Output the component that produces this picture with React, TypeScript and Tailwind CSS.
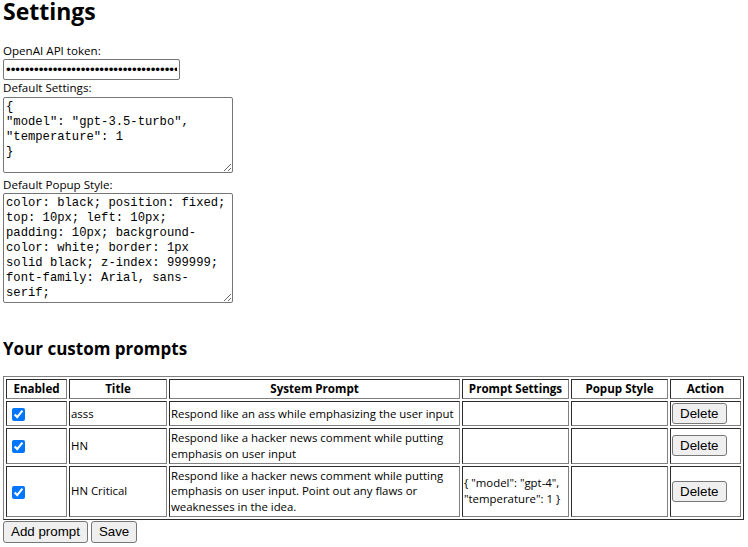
import React from "react";

const rows = [
  {
    title: "asss",
    prompt: "Respond like an ass while emphasizing the user input",
    settings: "",
    style: "",
  },
  {
    title: "HN",
    prompt: "Respond like a hacker news comment while putting emphasis on user input",
    settings: "",
    style: "",
  },
  {
    title: "HN Critical",
    prompt:
      "Respond like a hacker news comment while putting emphasis on user input. Point out any flaws or weaknesses in the idea.",
    settings: '{ "model": "gpt-4", "temperature": 1 }',
    style: "",
  },
];

const btn =
  "bg-[#efefef] border border-[#767676] rounded-[3px] px-[7px] text-[13.33px] leading-[15px] text-black font-['Liberation_Sans',Arial,sans-serif]";

const cell = "[border:1px_inset_#808080] p-[1px] align-middle";
const head = `${cell} font-bold text-center leading-[16px] text-[11.6px]`;

export default function App() {
  return (
    <div className="min-h-screen bg-white text-black pl-[3px] font-['Open_Sans',sans-serif]">
      <h1 className="text-[23px] leading-[22px] font-bold">Settings</h1>

      <label className="block text-[11.6px] leading-[16px] mt-[21px]">OpenAI API token:</label>
      <input
        type="password"
        readOnly
        defaultValue="sk-abcdefghijklmnopqrstuvwxyz0123456789ABCDEFGHIJKL"
        className="block w-[177px] h-[21px] border border-[#767676] rounded-[2px] px-[2px] py-[1px] text-[13.33px] font-['Liberation_Sans',Arial,sans-serif] bg-white outline-none"
      />

      <label className="block text-[11.6px] leading-[16px]">Default Settings:</label>
      <textarea
        readOnly
        defaultValue={'{\n"model": "gpt-3.5-turbo",\n"temperature": 1\n}'}
        className="block mt-[1px] w-[230px] h-[76px] border border-[#767676] rounded-[2px] p-[2px] text-[12.2px] leading-[15px] font-['Liberation_Mono',monospace] overflow-hidden bg-white outline-none"
      />

      <label className="block text-[11.6px] leading-[16px] mt-[4px]">Default Popup Style:</label>
      <textarea
        readOnly
        defaultValue="color: black; position: fixed; top: 10px; left: 10px; padding: 10px; background-color: white; border: 1px solid black; z-index: 999999; font-family: Arial, sans-serif;"
        className="block w-[230px] h-[110px] border border-[#767676] rounded-[2px] p-[2px] text-[12.2px] leading-[15px] font-['Liberation_Mono',monospace] overflow-hidden bg-white outline-none"
      />

      <h2 className="text-[17px] leading-[24px] font-bold mt-[34px]">Your custom prompts</h2>

      <table className="mt-[15px] w-[741px] table-fixed border-separate border-spacing-[2px] [border:1px_outset_#808080] text-[11.4px] leading-[15.8px]">
        <thead>
          <tr>
            <th className={`${head} w-[61px]`}>Enabled</th>
            <th className={`${head} w-[98px]`}>Title</th>
            <th className={`${head} w-[291px]`}>System Prompt</th>
            <th className={`${head} w-[107px]`}>Prompt Settings</th>
            <th className={`${head} w-[97px]`}>Popup Style</th>
            <th className={`${head} w-[71px]`}>Action</th>
          </tr>
        </thead>
        <tbody>
          {rows.map((r) => (
            <tr key={r.title}>
              <td className={cell}>
                <input type="checkbox" defaultChecked className="ml-[4px] align-middle w-[13px] h-[13px]" />
              </td>
              <td className={cell}>{r.title}</td>
              <td className={cell}>{r.prompt}</td>
              <td className={cell}>{r.settings}</td>
              <td className={cell}>{r.style}</td>
              <td className={cell}>
                <button className={`${btn} h-[21px] block`}>Delete</button>
              </td>
            </tr>
          ))}
        </tbody>
      </table>

      <div className="flex gap-[3px] mt-[1px]">
        <button className={`${btn} h-[22px]`}>Add prompt</button>
        <button className={`${btn} h-[22px]`}>Save</button>
      </div>
    </div>
  );
}
